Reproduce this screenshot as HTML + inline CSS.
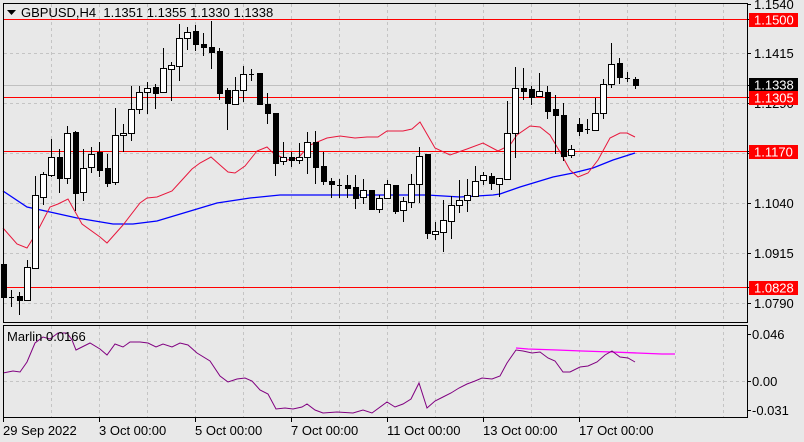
<!DOCTYPE html>
<html><head><meta charset="utf-8"><style>
html,body{margin:0;padding:0;background:#e8e8e8;width:804px;height:442px;overflow:hidden}
svg{display:block}
text{font-family:"Liberation Sans","DejaVu Sans",sans-serif;font-size:13px;fill:#000;white-space:pre}
</style></head><body>
<svg id="s" width="804" height="442" xmlns="http://www.w3.org/2000/svg">
<rect width="804" height="442" fill="#e8e8e8"/>
<g id="grid" stroke="#c4c4c4" stroke-dasharray="3,3" stroke-width="1"></g>
<line x1="3" y1="85.5" x2="747" y2="85.5" stroke="#c0c0c0"/>
<g stroke="#ff0000" stroke-width="1">
<line x1="3" y1="19.5" x2="747" y2="19.5"/>
<line x1="3" y1="97.5" x2="747" y2="97.5"/>
<line x1="3" y1="151.5" x2="747" y2="151.5"/>
<line x1="3" y1="287.5" x2="747" y2="287.5"/>
</g>
<polyline fill="none" stroke="#0000ff" stroke-width="1.3" points="3,191 27,207 50,212 77,218 113,224 133,224 157,221 187,212 217,203 250,198 280,195 293,195 360,195 427,195 460,197 493,195 500,194 520,187 553,177 573,173 593,168 613,160 635,153"/>
<polyline fill="none" stroke="#e8173c" stroke-width="1" points="3,228 17,244 27,248 37,232 50,207 58,204 68,199 82,224 100,237 107,243 123,225 140,203 147,198 157,197 172,191 182,180 192,169 200,163 211,157 220,165 228,172 235,173 245,166 257,151 267,147 273,153 287,160 298,158 310,145 327,138 340,136 355,138 367,137 378,137 387,131 403,131 412,129 420,122 435,148 450,155 467,149 483,143 498,151 510,145 517,135 530,126 540,127 550,135 560,152 570,170 578,177 588,173 598,160 610,138 620,133 627,133 635,137"/>
<g id="candles"></g>
<polyline fill="none" stroke="#ff00ff" stroke-width="1.3" points="516,348 528,349 557,350 582,351 612,352 637,353 662,354 675,354"/>
<polyline fill="none" stroke="#800080" stroke-width="1" points="3,373 13,371 20,372 27,362 35,343 43,337 50,339 58,333 67,333 72,340 76,350 90,343 100,349 107,355 115,344 123,347 130,342 140,342 148,343 156,347 163,344 172,347 180,343 188,345 197,353 210,361 220,376 228,382 237,379 245,378 252,381 260,390 268,394 276,409 285,408 293,409 302,407 307,404 315,410 323,413 337,412 353,413 363,410 372,413 387,402 395,407 403,404 411,399 419,383 427,408 435,401 443,397 451,393 459,388 467,384 475,381 482,378 492,379 500,376 507,363 516,350 523,351 532,353 540,352 548,358 555,361 563,372 570,372 580,367 588,366 597,362 605,355 612,351 620,357 628,358 635,362"/>
<rect x="3.5" y="3.5" width="744" height="319" fill="none" stroke="#000"/>
<rect x="3.5" y="325.5" width="744" height="92" fill="none" stroke="#000"/>
<g id="ticks" stroke="#000"></g>
<polygon points="7,10 16,10 11.5,15" fill="#000"/>
<text x="21" y="17" xml:space="preserve">GBPUSD,H4  1.1351 1.1355 1.1330 1.1338</text>
<text x="7" y="341">Marlin 0.0166</text>
<text x="754" y="9">1.1540</text>
<text x="754" y="58">1.1415</text>
<text x="754" y="108">1.1290</text>
<text x="754" y="208">1.1040</text>
<text x="754" y="258">1.0915</text>
<text x="754" y="308">1.0790</text>
<rect x="749" y="13" width="49" height="14" fill="#ff0000"/><text x="754" y="24.5" style="fill:#fff">1.1500</text>
<rect x="749" y="78" width="49" height="14" fill="#000"/><text x="754" y="89.5" style="fill:#fff">1.1338</text>
<rect x="749" y="91" width="49" height="14" fill="#ff0000"/><text x="754" y="102.5" style="fill:#fff">1.1305</text>
<rect x="749" y="145" width="49" height="14" fill="#ff0000"/><text x="754" y="156.5" style="fill:#fff">1.1170</text>
<rect x="749" y="281" width="49" height="14" fill="#ff0000"/><text x="754" y="292.5" style="fill:#fff">1.0828</text>
<text x="752" y="339">0.046</text>
<text x="752" y="386">0.00</text>
<text x="752" y="415">-0.031</text>
<text x="3" y="435">29 Sep 2022</text>
<text x="99" y="435">3 Oct 00:00</text>
<text x="195" y="435">5 Oct 00:00</text>
<text x="291" y="435">7 Oct 00:00</text>
<text x="387" y="435">11 Oct 00:00</text>
<text x="483" y="435">13 Oct 00:00</text>
<text x="579" y="435">17 Oct 00:00</text>
</svg>
<script>
var NS="http://www.w3.org/2000/svg";
function el(p,t,a){var e=document.createElementNS(NS,t);for(var k in a)e.setAttribute(k,a[k]);p.appendChild(e);return e;}
var g=document.getElementById('grid');
for(var x=51;x<747;x+=48){el(g,'line',{x1:x+.5,y1:4,x2:x+.5,y2:322});el(g,'line',{x1:x+.5,y1:326,x2:x+.5,y2:417});}
[53,103,153,203,253,303].forEach(function(y){el(g,'line',{x1:4,y1:y+.5,x2:747,y2:y+.5});});
el(g,'line',{x1:4,y1:381.5,x2:747,y2:381.5});
var t=document.getElementById('ticks');
[4,19,53,85,97,103,151,153,203,253,287,303,334,381,410].forEach(function(y){el(t,'line',{x1:747,y1:y+.5,x2:751,y2:y+.5});});
[3,99,195,291,387,483,579].forEach(function(x){el(t,'line',{x1:x+.5,y1:418,x2:x+.5,y2:422});});
var d=[[264,297,262,300,0],[297,297,290,306,2],[296,300,292,314,0],[267,300,260,300,1],[195,268,176,268,1],[174,197,172,204,1],[157,175,139,176,1],[157,178,149,192,0],[133,178,126,183,1],[132,193,131,210,0],[168,192,149,200,1],[154,167,147,172,1],[152,170,142,176,0],[168,183,154,186,0],[135,182,108,184,1],[133,135,124,151,1],[109,133,86,140,1],[92,109,86,113,1],
[88,92,82,113,1],[87,93,84,108,0],[68,92,48,92,1],[65,69,62,100,1],[38,66,24,80,1],[32,38,27,49,1],[31,44,25,50,0],[44,47,33,55,0],[47,52,21,68,0],[51,93,48,99,0],[90,103,88,129,0],[90,104,77,104,1],[74,90,66,101,1],[74,74,69,80,2],[73,104,73,104,0],[104,113,93,123,0],[113,163,113,175,0],
[157,161,142,164,1],[157,160,152,166,0],[157,160,143,163,1],[142,157,132,173,1],[142,167,131,183,0],[166,181,152,184,0],[181,184,178,197,0],[185,185,179,197,2],[185,188,175,197,0],[187,198,175,208,0],[190,197,179,203,1],[190,209,190,209,0],[198,209,195,212,1],[184,198,180,198,1],[185,211,185,213,0],[201,210,197,221,1],[184,202,174,207,1],[156,184,147,202,1],[154,233,154,238,0],[231,234,222,239,1],[220,232,200,251,1],[205,221,196,238,1],[200,205,180,212,1],[195,200,179,211,1],[181,196,166,196,1],[175,180,172,184,1],[176,183,173,189,0],[178,184,178,196,1],[133,179,101,179,1],[88,133,67,157,1],
[88,91,68,99,0],[89,97,86,104,0],[91,96,73,96,1],[92,111,86,118,0],[109,115,95,153,0],[115,156,103,160,0],[149,155,145,157,1],[124,131,118,135,0],[129,129,119,133,2],[113,130,98,130,1],[84,113,79,118,1],[64,84,43,87,1],[63,77,58,83,0],[78,78,72,81,2],[79,85,77,88,0]];
var c=document.getElementById('candles');
d.forEach(function(v,i){var x=3+8*i;
el(c,'line',{x1:x+.5,y1:v[2],x2:x+.5,y2:v[3]+1,stroke:'#000'});
if(v[4]==2){el(c,'line',{x1:x-2,y1:v[0]+.5,x2:x+3,y2:v[0]+.5,stroke:'#000'});}
else if(v[4]==1){el(c,'rect',{x:x-2.5,y:v[0]+.5,width:6,height:Math.max(1,v[1]-v[0]),fill:'#fff',stroke:'#000'});}
else{el(c,'rect',{x:x-2,y:v[0],width:6,height:Math.max(2,v[1]-v[0]+1),fill:'#000'});}
});
</script>
</body></html>
